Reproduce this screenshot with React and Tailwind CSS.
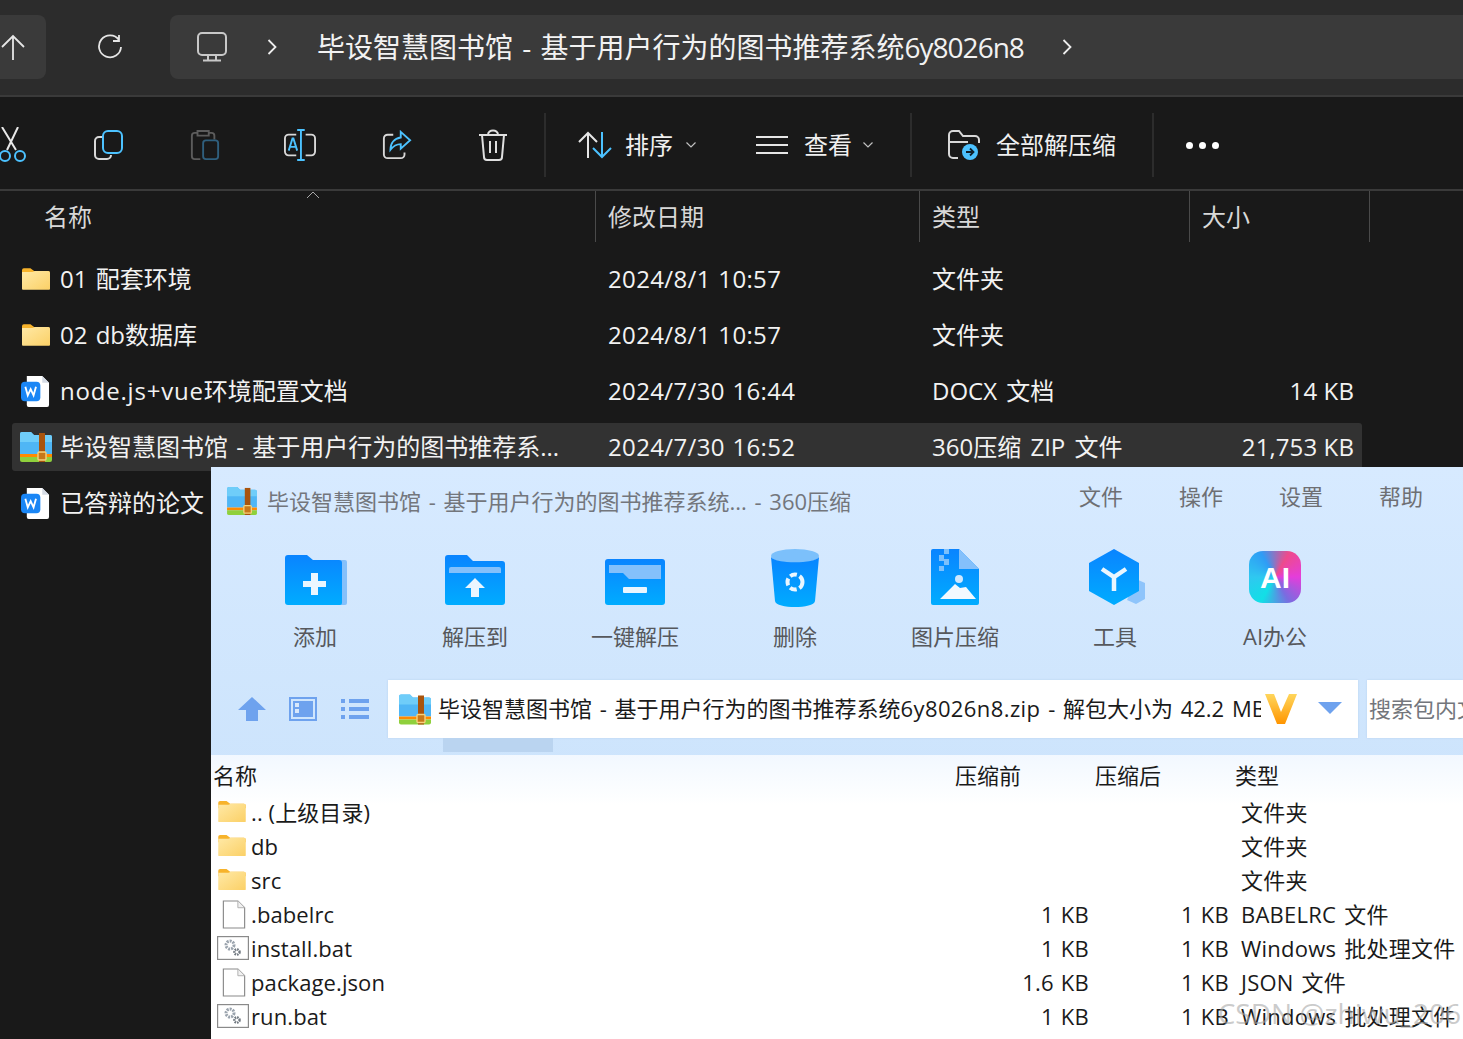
const cjk = "font-['Open_Sans','Noto_Sans_CJK_SC',sans-serif]";

function FolderIcon({ className }) {
  return (
    <svg viewBox="0 0 30 24" className={className}>
      <defs>
        <linearGradient id="fold" x1="0" y1="0" x2="1" y2="1">
          <stop offset="0" stopColor="#ffe9a6" />
          <stop offset="1" stopColor="#fbd066" />
        </linearGradient>
      </defs>
      <path d="M0 2a2 2 0 0 1 2-2h7l4 3h15a2 2 0 0 1 2 2v3H0z" fill="#f7b32b" />
      <path d="M0 4h11l3-1h14a2 2 0 0 1 2 2v17a1 1 0 0 1-1 1H1a1 1 0 0 1-1-1z" fill="url(#fold)" />
    </svg>
  );
}

function ZipIcon({ className }) {
  return (
    <svg viewBox="0 0 32 30" className={className}>
      <path d="M0 2a2 2 0 0 1 2-2h9l3 3h16a2 2 0 0 1 2 2v17H0z" fill="#4fb6f5" />
      <path d="M0 2a2 2 0 0 1 2-2h9l3 3h16a2 2 0 0 1 2 2v5H0z" fill="#6fcdf9" />
      <path d="M0 22h32v3H0z" fill="#ff8a00" />
      <path d="M0 25h32v3a2 2 0 0 1-2 2H2a2 2 0 0 1-2-2z" fill="#8fd03c" />
      <rect x="19" y="1" width="6" height="29" fill="#a9540d" />
      <rect x="18" y="20" width="8" height="8" rx="1" fill="#c8781a" stroke="#f6d27c" strokeWidth="1.4" />
    </svg>
  );
}

function WordIcon({ className }) {
  return (
    <svg viewBox="0 0 30 32" className={className}>
      <path d="M6 0h16l7 7v23a2 2 0 0 1-2 2H8a2 2 0 0 1-2-2z" fill="#fff" />
      <path d="M22 0l7 7h-7z" fill="#d5dbe5" />
      <rect x="0" y="6" width="20" height="20" rx="4" fill="#1a86f5" />
      <path d="M4.5 11l2.5 9 3-6.5 3 6.5 2.5-9" fill="none" stroke="#fff" strokeWidth="1.9" />
    </svg>
  );
}

function PlainFile({ className }) {
  return (
    <svg viewBox="0 0 24 30" className={className}>
      <path d="M1 1h15l7 7v21H1z" fill="#fff" stroke="#8a8a8a" strokeWidth="1.2" />
      <path d="M16 1v7h7" fill="#f1f1f1" stroke="#b0b0b0" strokeWidth="1" />
    </svg>
  );
}

function BatIcon({ className }) {
  return (
    <svg viewBox="0 0 32 24" className={className}>
      <rect x="0.6" y="0.6" width="30.8" height="22.8" fill="#fff" stroke="#8a8a8a" strokeWidth="1.2" />
      <circle cx="13" cy="9" r="4" fill="none" stroke="#9aa3ad" strokeWidth="3" strokeDasharray="2 1" />
      <circle cx="20" cy="16" r="2.6" fill="none" stroke="#707880" strokeWidth="2.4" strokeDasharray="1.6 0.8" />
    </svg>
  );
}

// blue folders of the 360 toolbar
function BlueGrad({ id }) {
  return (
    <defs>
      <linearGradient id={id} x1="0" y1="0" x2="0" y2="1">
        <stop offset="0" stopColor="#0a84ff" />
        <stop offset="1" stopColor="#00acff" />
      </linearGradient>
    </defs>
  );
}

function AddIcon() {
  return (
    <svg viewBox="0 0 62 50" className="ml-[2px] h-[50px] w-[62px]">
      <BlueGrad id="a1" />
      <path d="M50 5h10a2 2 0 0 1 2 2v41a2 2 0 0 1-2 2h-8z" fill="#84c0fb" />
      <path d="M0 3a3 3 0 0 1 3-3h19l6 5h26a3 3 0 0 1 3 3v40a2 2 0 0 1-2 2H3a3 3 0 0 1-3-3z" fill="url(#a1)" />
      <path d="M26 18h7v8h8v6h-8v8h-7v-8h-8v-6h8z" fill="#eaf6ff" />
    </svg>
  );
}

function ExtractToIcon() {
  return (
    <svg viewBox="0 0 60 50" className="h-[50px] w-[60px]">
      <BlueGrad id="a2" />
      <path d="M0 3a3 3 0 0 1 3-3h19l6 6h29a3 3 0 0 1 3 3v38a3 3 0 0 1-3 3H3a3 3 0 0 1-3-3z" fill="url(#a2)" />
      <path d="M6 12h48a2 2 0 0 1 2 2v4H4v-4a2 2 0 0 1 2-2z" fill="#84c0fb" />
      <path d="M30 23l10 10h-6v9h-8v-9h-6z" fill="#eaf6ff" />
    </svg>
  );
}

function OneClickIcon() {
  return (
    <svg viewBox="0 0 60 46" className="h-[46px] w-[60px]">
      <BlueGrad id="a3" />
      <rect width="60" height="46" rx="3" fill="url(#a3)" />
      <path d="M4 6h52v14H24l-6-6H4z" fill="#84c0fb" />
      <rect x="18" y="28" width="24" height="6" rx="1" fill="#eaf6ff" />
    </svg>
  );
}

function DeleteIcon() {
  return (
    <svg viewBox="0 0 50 58" className="-mb-[2px] h-[58px] w-[50px]">
      <BlueGrad id="a4" />
      <ellipse cx="25" cy="7" rx="24" ry="7" fill="#7cc0fb" />
      <path d="M1 8c4 7 44 7 48 0l-4 44c-1 8-39 8-40 0z" fill="url(#a4)" />
      <circle cx="25" cy="33" r="7.5" fill="none" stroke="#eaf6ff" strokeWidth="4" strokeDasharray="7 3" />
    </svg>
  );
}

function ImageZipIcon() {
  return (
    <svg viewBox="0 0 48 56" className="h-[56px] w-[48px]">
      <BlueGrad id="a5" />
      <path d="M2 0h26l20 20v34a2 2 0 0 1-2 2H2a2 2 0 0 1-2-2V2a2 2 0 0 1 2-2z" fill="url(#a5)" />
      <path d="M28 0l20 20H28z" fill="#84c0fb" />
      <path d="M8 0h10v5h-5v5h5v6h-5v6H8v-5h5v-5H8V6h5V0z" fill="#7cc0fb" />
      <circle cx="28" cy="30" r="4" fill="#cfe8ff" />
      <path d="M9 50l15-15 5 4 6-1 10 12z" fill="#f2f9ff" />
    </svg>
  );
}

function ToolIcon() {
  return (
    <svg viewBox="0 0 58 56" className="ml-[3px] h-[56px] w-[58px]">
      <BlueGrad id="a6" />
      <path d="M48 30l9 4v16l-9 5-9-4z" fill="#8ec4fb" />
      <path d="M26 0l25 14v28L26 56 1 42V14z" fill="url(#a6)" />
      <path d="M14 20l12 8 12-8M26 28v14" fill="none" stroke="#eaf6ff" strokeWidth="4.5" />
    </svg>
  );
}

function AiIcon() {
  return (
    <div className="mb-[2px] flex h-[52px] w-[52px] items-center justify-center rounded-[14px] bg-[conic-gradient(from_210deg,#12dfe6,#2fc8f0,#2f9cf5,#ee4b8c,#e43ddb,#7a6ce0,#12dfe6)] font-['Liberation_Sans',sans-serif] text-[30px] font-bold text-white">
      AI
    </div>
  );
}

const columns = [
  { label: "名称", width: "w-[596px]", pad: "pl-[44px]" },
  { label: "修改日期", width: "w-[324px]", pad: "pl-[12px]" },
  { label: "类型", width: "w-[270px]", pad: "pl-[12px]" },
  { label: "大小", width: "w-[180px]", pad: "pl-[12px]" },
];

const files = [
  { name: "01 配套环境", date: "2024/8/1 10:57", type: "文件夹", size: "", icon: "folder" },
  { name: "02 db数据库", date: "2024/8/1 10:57", type: "文件夹", size: "", icon: "folder" },
  { name: <><span className="tracking-[0.8px]">node.js+vue</span>环境配置文档</>, date: "2024/7/30 16:44", type: "DOCX 文档", size: "14 KB", icon: "word" },
  { name: "毕设智慧图书馆 - 基于用户行为的图书推荐系...", date: "2024/7/30 16:52", type: "360压缩 ZIP 文件", size: "21,753 KB", icon: "zip", selected: true },
  { name: "已答辩的论文", date: "", type: "", size: "", icon: "word" },
];

const actions = [
  { label: "添加", icon: <AddIcon /> },
  { label: "解压到", icon: <ExtractToIcon /> },
  { label: "一键解压", icon: <OneClickIcon /> },
  { label: "删除", icon: <DeleteIcon /> },
  { label: "图片压缩", icon: <ImageZipIcon /> },
  { label: "工具", icon: <ToolIcon /> },
  { label: "AI办公", icon: <AiIcon /> },
];

const entries = [
  { name: ".. (上级目录)", type: "文件夹", icon: "folder" },
  { name: "db", type: "文件夹", icon: "folder" },
  { name: "src", type: "文件夹", icon: "folder" },
  { name: ".babelrc", before: "1 KB", after: "1 KB", type: "BABELRC 文件", icon: "file" },
  { name: "install.bat", before: "1 KB", after: "1 KB", type: "Windows 批处理文件", icon: "bat" },
  { name: "package.json", before: "1.6 KB", after: "1 KB", type: "JSON 文件", icon: "file" },
  { name: "run.bat", before: "1 KB", after: "1 KB", type: "Windows 批处理文件", icon: "bat" },
];

function ToolbarIcons() {
  return (
    <div className="flex w-[544px] shrink-0 items-center">
      <svg viewBox="0 0 32 36" className="ml-[-3px] mr-[65px] h-[36px] w-[32px]" fill="none" strokeWidth="2">
        <path d="M5 0l14 23M21 0L10 23" stroke="#e8e8e8" />
        <circle cx="8" cy="29" r="5" stroke="#4cc2ff" />
        <circle cx="23" cy="29" r="5" stroke="#4cc2ff" />
      </svg>
      <svg viewBox="0 0 32 32" className="mr-[64px] h-[32px] w-[32px]" fill="none" strokeWidth="2">
        <path d="M8 8H5a4 4 0 0 0-4 4v14a4 4 0 0 0 4 4h8a4 4 0 0 0 4-4" stroke="#d8d8d8" />
        <rect x="9" y="2" width="19" height="22" rx="5" stroke="#4cc2ff" />
      </svg>
      <svg viewBox="0 0 32 34" className="mr-[64px] h-[32px] w-[30px]" fill="none" strokeWidth="2">
        <path d="M8 4H5a3 3 0 0 0-3 3v22a3 3 0 0 0 3 3h6M20 4h3a3 3 0 0 1 3 3v4M8 2h12v5H8z" stroke="#5c5c5c" />
        <rect x="14" y="12" width="16" height="20" rx="3" stroke="#2f5f7d" />
      </svg>
      <svg viewBox="0 0 34 34" className="mr-[66px] h-[32px] w-[32px]" fill="none" strokeWidth="2">
        <path d="M13 6H5a4 4 0 0 0-4 4v14a4 4 0 0 0 4 4h8M23 6h6a4 4 0 0 1 4 4v14a4 4 0 0 1-4 4h-6" stroke="#d8d8d8" />
        <path d="M18 1v32M14 1h8M14 33h8M5 23l4-13h1l4 13M6.5 19h6" stroke="#4cc2ff" />
      </svg>
      <svg viewBox="0 0 32 32" className="mr-[66px] h-[30px] w-[30px]" fill="none" strokeWidth="2">
        <path d="M12 5H6a4 4 0 0 0-4 4v17a4 4 0 0 0 4 4h14a4 4 0 0 0 4-4v-2" stroke="#d8d8d8" />
        <path d="M20 2l10 9-10 9v-5c-5 0-8 2-11 6 0-7 4-12 11-13z" stroke="#4cc2ff" />
      </svg>
      <svg viewBox="0 0 30 32" className="h-[32px] w-[30px]" fill="none" stroke="#e0e0e0" strokeWidth="2">
        <path d="M1 6h28M10 6c0-6 10-6 10 0M4 6l2 22a3 3 0 0 0 3 3h12a3 3 0 0 0 3-3l2-22M12 12v12M18 12v12" />
      </svg>
    </div>
  );
}

function Chevron() {
  return (
    <svg viewBox="0 0 10 6" className="h-[6px] w-[10px]" fill="none" stroke="#c0c0c0" strokeWidth="1.2">
      <path d="M0.5 0.5L5 5l4.5-4.5" />
    </svg>
  );
}

function Explorer() {
  return (
    <>
      {/* address bar */}
      <div className="flex h-[95px] shrink-0 items-center bg-[#2c2c2c] pb-[2px]">
        <div className="flex h-[64px] w-[46px] items-center rounded-r-lg bg-[#3a3a3a]">
          <svg viewBox="0 0 26 26" className="h-[26px] w-[26px]" fill="none" stroke="#e6e6e6" strokeWidth="1.8">
            <path d="M13 26V2M2 13L13 2l11 11" />
          </svg>
        </div>
        <svg viewBox="0 0 26 26" className="ml-[51px] h-[26px] w-[26px]" fill="none" stroke="#e6e6e6" strokeWidth="1.8">
          <path d="M22 6a11 11 0 1 0 2 7M22 1v6h-6" />
        </svg>
        <div className="ml-[47px] flex h-[64px] flex-1 items-center rounded-l-lg bg-[#3a3a3a] text-[28px] text-[#f2f2f2]">
          <svg viewBox="0 0 30 30" className="ml-[27px] h-[30px] w-[30px]" fill="none" stroke="#c8c8c8" strokeWidth="2">
            <rect x="1" y="1" width="28" height="22" rx="4" />
            <path d="M11 23v5M19 23v5M6 28.5h18" />
          </svg>
          <svg viewBox="0 0 10 16" className="ml-[40px] h-[16px] w-[10px]" fill="none" stroke="#eeeeee" strokeWidth="1.8">
            <path d="M1.5 1l7 7-7 7" />
          </svg>
          <span className="ml-[40px] whitespace-nowrap [word-spacing:2px]">
            毕设智慧图书馆 - 基于用户行为的图书推荐系统<span className="tracking-[-1px]">6y8026n8</span>
          </span>
          <svg viewBox="0 0 10 16" className="ml-[38px] h-[16px] w-[10px]" fill="none" stroke="#eeeeee" strokeWidth="1.8">
            <path d="M1.5 1l7 7-7 7" />
          </svg>
        </div>
      </div>

      {/* command bar */}
      <div className="flex h-[96px] shrink-0 items-center border-y-2 border-[#3a3a3a] bg-[#191919] pt-[4px] text-[24px] text-[#f0f0f0]">
        <ToolbarIcons />
        <div className="h-[64px] w-[2px] bg-[#2c2c2c]" />
        <div className="flex w-[364px] items-center">
          <svg viewBox="0 0 34 28" className="ml-[32px] h-[28px] w-[34px]" fill="none" strokeWidth="2">
            <path d="M10 27V2M1 11l9-9 9 9" stroke="#e6e6e6" />
            <path d="M24 1v25M15 17l9 9 9-9" stroke="#4cc2ff" />
          </svg>
          <span className="ml-[13px]">排序</span>
          <span className="ml-[13px]"><Chevron /></span>
          <svg viewBox="0 0 32 20" className="ml-[60px] h-[20px] w-[32px]" fill="none" stroke="#e6e6e6" strokeWidth="1.8">
            <path d="M0 2h32M0 10h32M0 18h32" />
          </svg>
          <span className="ml-[16px]">查看</span>
          <span className="ml-[11px]"><Chevron /></span>
        </div>
        <div className="h-[64px] w-[2px] bg-[#2c2c2c]" />
        <div className="flex w-[240px] items-center">
          <svg viewBox="0 0 34 30" className="ml-[36px] h-[30px] w-[34px]" fill="none">
            <path d="M10 28H5a4 4 0 0 1-4-4V5a4 4 0 0 1 4-4h6l4 5h12a4 4 0 0 1 4 4v3M2 12h18" stroke="#d8d8d8" strokeWidth="2" />
            <circle cx="22" cy="22" r="8" fill="#4cc2ff" />
            <path d="M18 22h7M22 18.5l3.5 3.5-3.5 3.5" stroke="#10202a" strokeWidth="1.8" />
          </svg>
          <span className="ml-[14px] whitespace-nowrap">全部解压缩</span>
        </div>
        <div className="h-[64px] w-[2px] bg-[#2c2c2c]" />
        <div className="ml-[32px] flex gap-[6px]">
          <span className="h-[7px] w-[7px] rounded-full bg-white" />
          <span className="h-[7px] w-[7px] rounded-full bg-white" />
          <span className="h-[7px] w-[7px] rounded-full bg-white" />
        </div>
      </div>

      {/* list */}
      <div className="relative flex-1 bg-[#191919] text-[24px]">
        <svg viewBox="0 0 14 8" className="absolute left-[306px] top-0 h-[8px] w-[14px]" fill="none" stroke="#a8a8a8" strokeWidth="1">
          <path d="M1 7l6-6 6 6" />
        </svg>
        <div className="flex h-[51px] text-[#d8d8d8]">
          {columns.map((col) => (
            <div key={col.label} className={`${col.width} ${col.pad} flex items-center border-r border-[#4a4a4a]`}>
              {col.label}
            </div>
          ))}
        </div>
        <div className="mt-[13px] flex flex-col gap-[8px] pl-[12px] text-[#f2f2f2]">
          {files.map((file) => (
            <div key={file.date + file.type + file.icon} className={`flex h-[48px] w-[1350px] items-center rounded-[3px] ${file.selected ? "bg-[#323232]" : ""}`}>
              <div className="flex w-[596px] items-center overflow-hidden">
                <div className="flex w-[48px] shrink-0 items-center justify-center">
                  {file.icon === "folder" && <FolderIcon className="ml-[-1px] h-[23px] w-[28px]" />}
                  {file.icon === "word" && <WordIcon className="ml-[-1px] h-[31px] w-[29px]" />}
                  {file.icon === "zip" && <ZipIcon className="ml-[-1px] h-[30px] w-[32px]" />}
                </div>
                <span className="whitespace-nowrap [word-spacing:2px]">{file.name}</span>
              </div>
              <div className="w-[324px] whitespace-nowrap tracking-[0.35px] [word-spacing:1px]">{file.date}</div>
              <div className="w-[270px] whitespace-nowrap [word-spacing:3px]">{file.type}</div>
              <div className="w-[152px] whitespace-nowrap text-right tracking-[0.1px]">{file.size}</div>
            </div>
          ))}
        </div>
      </div>
    </>
  );
}

function ZipWindow() {
  return (
    <div className="absolute bottom-0 left-[211px] right-0 top-[467px] flex flex-col bg-[linear-gradient(#d7eaff,#c4dffa)] text-[22px]">
      <div className="flex h-[68px] shrink-0 items-center text-[#73767c]">
        <ZipIcon className="ml-[15px] h-[28px] w-[32px]" />
        <span className="ml-[9px] w-[700px] whitespace-nowrap [word-spacing:2px]">毕设智慧图书馆 - 基于用户行为的图书推荐系统... - 360压缩</span>
        <div className="ml-[112px] flex gap-[56px] pb-[10px] text-[#6e6f73]">
          <span>文件</span>
          <span>操作</span>
          <span>设置</span>
          <span>帮助</span>
        </div>
      </div>

      <div className="ml-[24px] flex h-[120px] shrink-0">
        {actions.map((action) => (
          <div key={action.label} className="flex w-[160px] flex-col items-center">
            <div className="mb-[15px] flex h-[70px] items-end justify-center">
              {action.icon}
            </div>
            <span className="whitespace-nowrap text-[#56585c]">{action.label}</span>
          </div>
        ))}
      </div>

      <div className="relative mt-[25px] flex h-[58px] shrink-0 items-center">
        <div className="ml-[27px] flex items-center">
          <svg viewBox="0 0 28 24" className="h-[24px] w-[28px]" fill="#6ea2ee">
            <path d="M14 0l14 13h-8v11H8V13H0z" />
          </svg>
          <svg viewBox="0 0 28 24" className="ml-[23px] h-[24px] w-[28px]" fill="none">
            <rect x="1" y="1" width="26" height="22" stroke="#6ea2ee" strokeWidth="2" />
            <rect x="4" y="4" width="20" height="16" fill="#6ea2ee" />
            <rect x="6" y="6" width="4" height="4" fill="#d8e8fb" />
            <rect x="6" y="12" width="4" height="4" fill="#d8e8fb" />
          </svg>
          <svg viewBox="0 0 28 20" className="ml-[24px] h-[20px] w-[28px]" fill="#6ea2ee">
            <path d="M0 0h4v4H0zM8 0h20v4H8zM0 8h4v4H0zM8 8h20v4H8zM0 16h4v4H0zM8 16h20v4H8z" />
          </svg>
        </div>
        <div className="ml-[19px] flex h-[58px] w-[970px] shrink-0 items-center bg-white pb-[2px] text-[#1a1a1a] shadow-[0_0_2px_#b9d2ee]">
          <ZipIcon className="ml-[11px] mt-[2px] h-[31px] w-[32px] shrink-0" />
          <span className="ml-[7px] w-[823px] shrink-0 overflow-hidden whitespace-nowrap [word-spacing:2px]">
            毕设智慧图书馆 - 基于用户行为的图书推荐系统<span className="tracking-[0.4px]">6y8026n8.zip</span> - 解包大小为 42.2 MB
          </span>
          <svg viewBox="0 0 32 30" className="ml-[4px] mt-[2px] h-[30px] w-[32px] shrink-0">
            <defs>
              <linearGradient id="vmark" x1="0" y1="0" x2="0" y2="1">
                <stop offset="0" stopColor="#ffd65c" />
                <stop offset="1" stopColor="#ff9500" />
              </linearGradient>
            </defs>
            <path d="M0 0h9l7 18L24 0h8L20 30h-8z" fill="url(#vmark)" />
          </svg>
          <svg viewBox="0 0 24 12" className="ml-[21px] h-[12px] w-[24px] shrink-0" fill="#6ea2ee">
            <path d="M0 0h24L12 12z" />
          </svg>
        </div>
        <div className="ml-[9px] flex h-[58px] flex-1 items-center overflow-hidden bg-white pb-[2px] pl-[2px] whitespace-nowrap text-[#73767c] shadow-[0_0_2px_#b9d2ee]">
          搜索包内文件
        </div>
        <div className="absolute left-[232px] top-[58px] h-[14px] w-[110px] bg-[#bad4f0]" />
      </div>

      <div className="mt-[17px] flex-1 bg-[linear-gradient(#f2f8ff,#ffffff_50px)] pl-[2px] text-[#1a1a1a]">
        <div className="flex h-[40px] items-center">
          <div className="w-[742px]">名称</div>
          <div className="w-[140px]">压缩前</div>
          <div className="w-[140px]">压缩后</div>
          <div>类型</div>
        </div>
        <div className="flex flex-col">
          {entries.map((entry) => (
            <div key={entry.name} className="flex h-[34px] items-center">
              <div className="flex w-[742px] items-center">
                <div className="flex w-[38px] shrink-0 justify-center">
                  {entry.icon === "folder" && <FolderIcon className="h-[22px] w-[28px]" />}
                  {entry.icon === "file" && <PlainFile className="ml-[3px] h-[29px] w-[24px]" />}
                  {entry.icon === "bat" && <BatIcon className="ml-[2px] h-[24px] w-[32px]" />}
                </div>
                <span className="whitespace-nowrap tracking-[0.1px]">{entry.name}</span>
              </div>
              <div className="w-[134px] whitespace-nowrap text-right tracking-[0.25px] [word-spacing:1px]">{entry.before}</div>
              <div className="w-[140px] whitespace-nowrap text-right tracking-[0.25px] [word-spacing:1px]">{entry.after}</div>
              <div className="ml-[12px] whitespace-nowrap tracking-[0.25px] [word-spacing:2px]">{entry.type}</div>
            </div>
          ))}
        </div>
      </div>
    </div>
  );
}

export default function App() {
  return (
    <div className={`${cjk} relative flex h-[1039px] w-[1463px] flex-col overflow-hidden bg-[#191919]`}>
      <Explorer />
      <ZipWindow />
      <div className="absolute bottom-[5px] right-[2px] whitespace-nowrap text-[28px] text-[#a8a8a8]/60">CSDN @zhiwu_206</div>
    </div>
  );
}
